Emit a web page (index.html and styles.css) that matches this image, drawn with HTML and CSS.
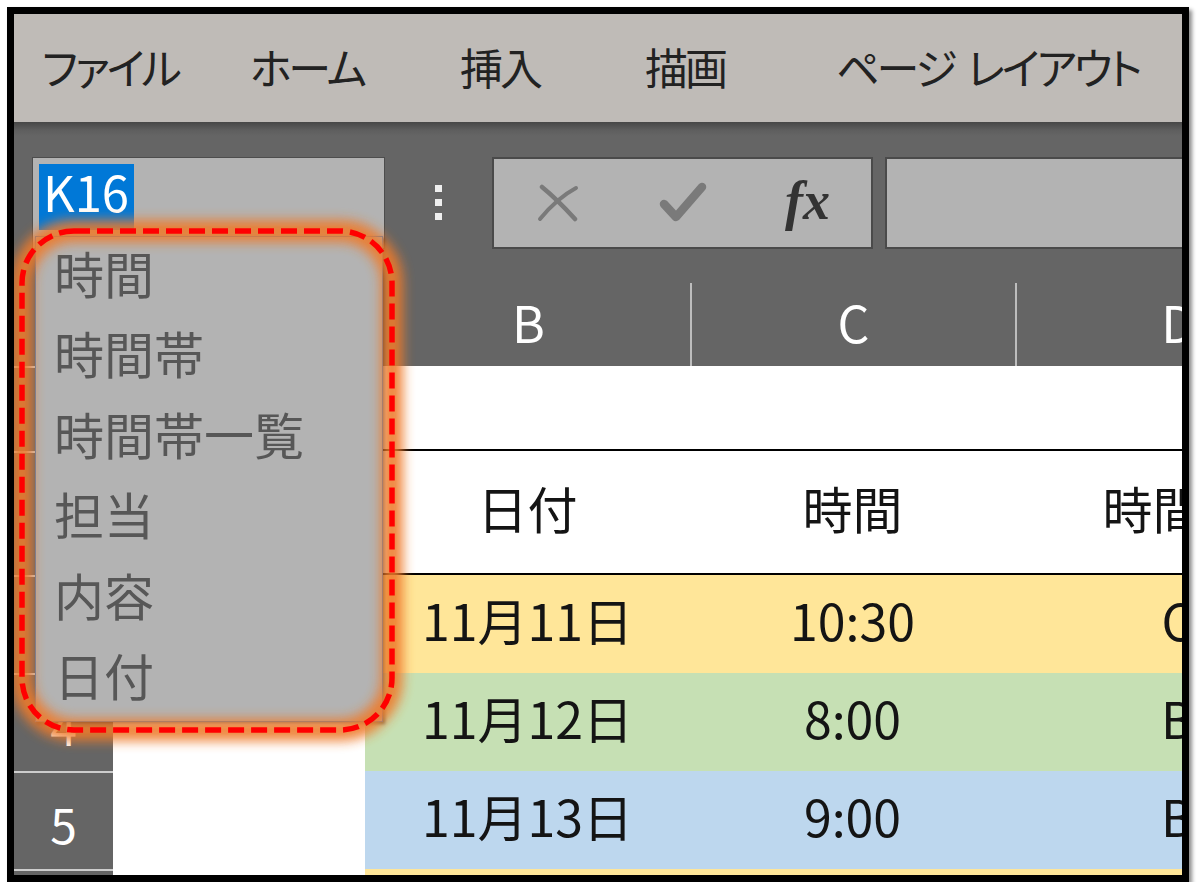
FILE: index.html
```html
<!DOCTYPE html>
<html lang="ja">
<head>
<meta charset="utf-8">
<title>Excel 名前ボックス</title>
<link rel="stylesheet" href="styles.css">
</head>
<body>
<div class="frame">
  <div class="menubar">
    <span>ファイル</span><span>ホーム</span><span>挿入</span><span>描画</span><span>ページ レイアウト</span>
  </div>
  <div class="toolbar">
    <div class="namebox"><span class="sel">K16</span></div>
    <div class="dots"><i></i><i></i><i></i></div>
    <div class="fbuttons">
      <span class="fbtn">
        <svg width="42" height="38" viewBox="0 0 42 38"><path d="M5 3 C16 12 28 24 38 35" fill="none" stroke="#7a7a7a" stroke-width="4.5" stroke-linecap="round"/><path d="M3 35 C12 24 24 12 39 4" fill="none" stroke="#7a7a7a" stroke-width="4" stroke-linecap="round"/></svg>
      </span>
      <span class="fbtn">
        <svg width="48" height="42" viewBox="0 0 48 42"><path d="M5 22 L17 35 L43 5" fill="none" stroke="#7a7a7a" stroke-width="8.5" stroke-linecap="round" stroke-linejoin="round"/></svg>
      </span>
      <span class="fbtn fx">fx</span>
    </div>
    <div class="finput"></div>
  </div>
  <div class="colheads">
    <div class="corner"></div>
    <div class="ch ca">A</div>
    <div class="ch cb">B</div>
    <div class="ch cc">C</div>
    <div class="ch cd">D</div>
  </div>
  <div class="sheet">
    <div class="row r1">
      <div class="rh">1</div><div class="cell ca"></div><div class="cell cb line"></div><div class="cell cc line"></div><div class="cell cd line"></div>
    </div>
    <div class="row r2">
      <div class="rh">2</div><div class="cell ca"></div><div class="cell cb line">日付</div><div class="cell cc line">時間</div><div class="cell cd line">時間帯</div>
    </div>
    <div class="row r3 yellow">
      <div class="rh">3</div><div class="cell ca"></div><div class="cell cb">11月11日</div><div class="cell cc">10:30</div><div class="cell cd">C</div>
    </div>
    <div class="row r4 green">
      <div class="rh">4</div><div class="cell ca"></div><div class="cell cb">11月12日</div><div class="cell cc">8:00</div><div class="cell cd">B</div>
    </div>
    <div class="row r5 blue">
      <div class="rh">5</div><div class="cell ca"></div><div class="cell cb">11月13日</div><div class="cell cc">9:00</div><div class="cell cd">B</div>
    </div>
    <div class="row r6 yellow">
      <div class="rh">6</div><div class="cell ca"></div><div class="cell cb"></div><div class="cell cc"></div><div class="cell cd"></div>
    </div>
  </div>
  <ul class="dropdown">
    <li>時間</li>
    <li>時間帯</li>
    <li>時間帯一覧</li>
    <li>担当</li>
    <li>内容</li>
    <li>日付</li>
  </ul>
  <svg class="ring" width="440" height="760" viewBox="0 0 440 760">
    <defs>
      <filter id="glow" x="-20%" y="-20%" width="140%" height="140%">
        <feGaussianBlur stdDeviation="6"/>
      </filter>
    </defs>
    <rect x="8" y="217" width="370" height="499" rx="52" ry="52" fill="none" stroke="#ee7a2a" stroke-width="22" opacity="0.9" filter="url(#glow)"/>
    <rect x="8" y="217" width="370" height="499" rx="52" ry="52" fill="none" stroke="#ff0000" stroke-width="5.5" stroke-dasharray="16 7"/>
  </svg>
</div>
</body>
</html>
```
FILE: styles.css
```css
* { box-sizing: border-box; }
html, body { margin: 0; padding: 0; background: #ffffff; }
body { font-family: "Noto Sans CJK JP", "Noto Sans", sans-serif; }

.frame {
  position: relative;
  margin: 7px 0 0 7px;
  width: 1182px;
  height: 875px;
  border: 7px solid #000;
  overflow: hidden;
  background: #656565;
  box-shadow: 3px 3px 4px rgba(0,0,0,0.45);
}

.menubar {
  height: 108px;
  background: #bfbbb7;
  display: grid;
  grid-template-columns: 208px 210px 185px 191px auto;
  align-items: center;
  padding-left: 28px;
  padding-bottom: 4px;
  font-size: 43px;
  letter-spacing: -3px;
  word-spacing: 6px;
  color: #222;
  font-feature-settings: "palt";
  white-space: nowrap;
}

.toolbar {
  height: 127px;
  background: linear-gradient(#474747 0px, #5e5e5e 8px, #656565 14px);
  display: flex;
  align-items: flex-start;
  padding-top: 35px;
}
.toolbar > * { flex-shrink: 0; }

.namebox {
  margin-left: 18px;
  width: 353px;
  height: 92px;
  background: #b3b3b3;
  border: 1px solid #4d4d4d;
  padding: 6px 0 0 6px;
}
.sel {
  display: inline-block;
  background: #0078d7;
  color: #fff;
  font-size: 49px;
  line-height: 54px;
  height: 66px;
  padding: 0 5px 0 4px;
}

.dots {
  margin: 28px 50px 0 50px;
  display: flex;
  flex-direction: column;
  gap: 7px;
}
.dots i {
  display: block;
  width: 7px;
  height: 7px;
  background: #eeeeee;
}

.fbuttons {
  width: 381px;
  height: 92px;
  background: #b3b3b3;
  border: 2px solid #4a4a4a;
  display: flex;
  align-items: center;
  padding-left: 1px;
}
.fbtn {
  width: 125px;
  display: flex;
  justify-content: center;
  align-items: center;
}
.fx {
  font-family: "Liberation Serif", "DejaVu Serif", serif;
  font-style: italic;
  font-weight: bold;
  font-size: 54px;
  color: #333;
  line-height: 1;
  padding-bottom: 4px;
}
.finput {
  margin-left: 12px;
  width: 320px;
  height: 92px;
  background: #b3b3b3;
  border: 2px solid #4a4a4a;
}

.colheads {
  height: 117px;
  display: flex;
  align-items: stretch;
  padding-top: 34px;
  color: #fff;
  font-size: 50px;
}
.corner { width: 99px; flex-shrink: 0; }
.ch {
  display: flex;
  align-items: center;
  justify-content: center;
  flex-shrink: 0;
  padding-bottom: 8px;
}
.ca { width: 252px; flex-shrink: 0; }
.cb { width: 325px; flex-shrink: 0; }
.cc { width: 325px; flex-shrink: 0; }
.cd { width: 325px; flex-shrink: 0; }
.ch.cb, .ch.cc, .ch.cd { border-left: 2px solid #bdbdbd; }

.sheet { background: #fff; }
.row { display: flex; height: 98px; }
.row.r1 { height: 85px; }
.row.r2 { height: 124px; }
.rh {
  width: 99px;
  flex-shrink: 0;
  background: #656565;
  border-top: 2px solid #cdcdcd;
  color: #fff;
  font-size: 48px;
  display: flex;
  align-items: center;
  justify-content: center;
  padding-top: 4px;
}
.cell {
  display: flex;
  align-items: center;
  justify-content: center;
  font-size: 50px;
  color: #141414;
  white-space: nowrap;
  background: #fff;
  padding-bottom: 11px;
}
.cell.line { border-bottom: 2px solid #000; }
.yellow .cell.cb, .yellow .cell.cc, .yellow .cell.cd { background: #ffe699; }
.green .cell.cb, .green .cell.cc, .green .cell.cd { background: #c6e0b4; }
.blue .cell.cb, .blue .cell.cc, .blue .cell.cd { background: #bdd7ee; }

.dropdown {
  position: absolute;
  left: 21px;
  top: 222px;
  width: 348px;
  height: 486px;
  margin: 0;
  padding: 0 0 0 18px;
  list-style: none;
  background: #b3b3b3;
  border: 1px solid #4f7fb8;
  box-shadow: 2px 2px 3px rgba(0,0,0,0.5);
  color: #575757;
  font-size: 50px;
}
.dropdown li {
  height: 80.4px;
  line-height: 70px;
}

.ring {
  position: absolute;
  left: 0;
  top: 0;
  pointer-events: none;
}
```
